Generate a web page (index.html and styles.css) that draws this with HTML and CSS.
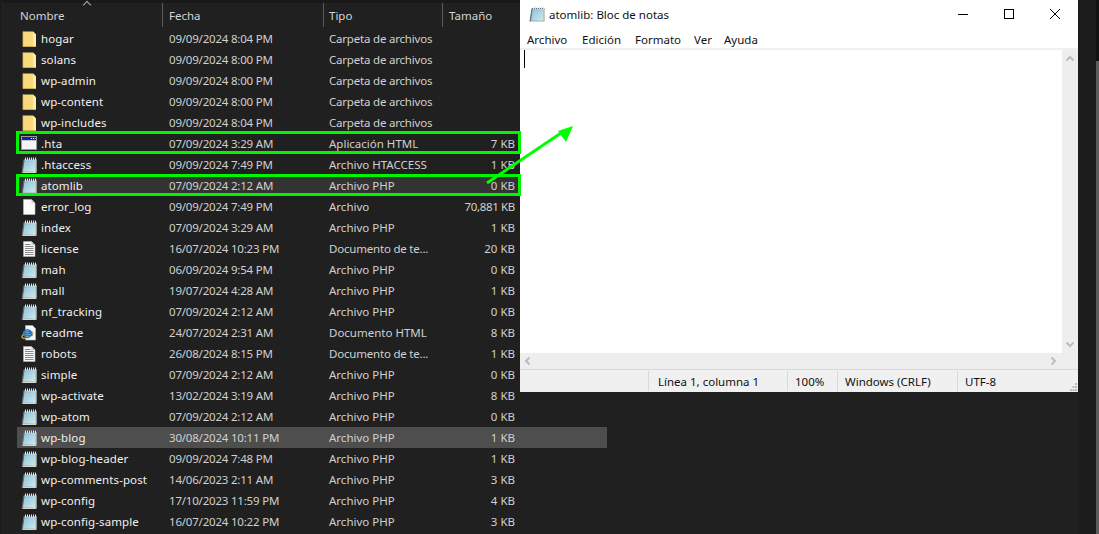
FILE: index.html
```html
<!DOCTYPE html>
<html lang="es">
<head>
<meta charset="utf-8">
<title>atomlib: Bloc de notas</title>
<link rel="stylesheet" href="styles.css">
</head>
<body>
<svg class="defs" width="0" height="0" aria-hidden="true">
  <defs>
    <linearGradient id="pad" x1="0" y1="0" x2="1" y2="1">
      <stop offset="0" stop-color="#7db6ce"/>
      <stop offset="1" stop-color="#d8eff2"/>
    </linearGradient>
    <symbol id="i-folder" viewBox="0 0 16 16">
      <path d="M2 .5h10l3 3v12H2z" fill="#f8da7c"/>
      <path d="M12 .5l3 3v12h-3z" fill="#fcecb0"/>
      <path d="M2 .5v15h13" fill="none" stroke="#dfb650" stroke-width=".8"/>
    </symbol>
    <symbol id="i-pad" viewBox="0 0 16 16">
      <path d="M3 2h12.500v13.500H1z" fill="#7d8488"/>
      <path d="M3.500 2.500h11v12.300H2z" fill="url(#pad)"/>
      <path d="M15 2.500V15.500H1.500" fill="none" stroke="#d9d5c6" stroke-width="1"/>
      <path d="M3.500 2.500h11" stroke="#5f6b70" stroke-width="1"/>
      <path d="M4.500 .5v3M6.500 .5v3M8.500 .5v3M10.500 .5v3M12.500 .5v3M14.500 .5v3" stroke="#e4e4e4" stroke-width="1"/>
      <path d="M3.500 6h11M3.300 8h11.200M3.100 10h11.400M2.900 12h11.600" stroke="#b5dbe5" stroke-width=".6"/>
      <path d="M3 2.500L1 15.500" stroke="#5f6b70" stroke-width="1"/>
    </symbol>
    <symbol id="i-hta" viewBox="0 0 16 16">
      <rect x=".5" y=".5" width="15" height="13" fill="#f4f4f4" stroke="#9a9a9a"/>
      <rect x="1" y="1" width="14" height="3" fill="#1a1fa8"/>
      <path d="M10 2.500h1M12 2.500h1M13.800 2.500h.7" stroke="#fff" stroke-width="1"/>
      <rect x="1" y="4" width="14" height="1" fill="#c4c4c4"/>
    </symbol>
    <symbol id="i-doc" viewBox="0 0 16 16">
      <path d="M2.500 .5h8l3.500 3.500v11.500H2.500z" fill="#fbfbfb" stroke="#bdbdbd" stroke-width=".6"/>
      <path d="M10.500 .5v3.500H14z" fill="#cfcfcf"/>
    </symbol>
    <symbol id="i-txt" viewBox="0 0 16 16">
      <path d="M2.500 .5h8l3.500 3.500v11.500H2.500z" fill="#f7f7f7" stroke="#b5b5b5" stroke-width=".6"/>
      <path d="M10.500 .5v3.500H14z" fill="#c8c8c8"/>
      <path d="M4 3.500h5.500M4 5.500h8.500M4 7.500h8.500M4 9.500h8.500M4 11.500h8.500M4 13.500h8.500" stroke="#8a8a8a" stroke-width="1"/>
    </symbol>
    <symbol id="i-ie" viewBox="0 0 16 16">
      <path d="M4.500 .5h7l3 3v11.500h-10z" fill="#f8f8f8" stroke="#b5b5b5" stroke-width=".6"/>
      <ellipse cx="6.500" cy="10" rx="6" ry="2.300" fill="none" stroke="#e8b823" stroke-width="1.200" transform="rotate(-25 6.500 10)"/>
      <path d="M9.600 10.400H3.700c.2 2.300 3.900 3 5.400 1M3.700 8.800c.2-2.800 5-3 5.600 0zM2.300 9.300c0-3.500 3.300-5 5-4.300 2.400.6 3.600 2.400 3.500 5.400H4.500" fill="none" stroke="#1b7fd6" stroke-width="1.500"/>
    </symbol>
  </defs>
</svg>

<div class="desktop">
  <main class="explorer">
    <header class="columns">
      <div class="col col-name">Nombre<span class="sort"></span></div>
      <div class="col col-date">Fecha</div>
      <div class="col col-type">Tipo</div>
      <div class="col col-size">Tamaño</div>
    </header>
    <ul class="files">
      <li class="file"><span class="name"><svg class="ico"><use href="#i-folder"/></svg>hogar</span><span class="date">09/09/2024 8:04 PM</span><span class="tight">Carpeta de archivos</span><span class="size"></span></li>
      <li class="file"><span class="name"><svg class="ico"><use href="#i-folder"/></svg>solans</span><span class="date">09/09/2024 8:00 PM</span><span class="tight">Carpeta de archivos</span><span class="size"></span></li>
      <li class="file"><span class="name"><svg class="ico"><use href="#i-folder"/></svg>wp-admin</span><span class="date">09/09/2024 8:00 PM</span><span class="tight">Carpeta de archivos</span><span class="size"></span></li>
      <li class="file"><span class="name"><svg class="ico"><use href="#i-folder"/></svg>wp-content</span><span class="date">09/09/2024 8:00 PM</span><span class="tight">Carpeta de archivos</span><span class="size"></span></li>
      <li class="file"><span class="name"><svg class="ico"><use href="#i-folder"/></svg>wp-includes</span><span class="date">09/09/2024 8:04 PM</span><span class="tight">Carpeta de archivos</span><span class="size"></span></li>
      <li class="file"><span class="name"><svg class="ico"><use href="#i-hta"/></svg>.hta</span><span class="date">07/09/2024 3:29 AM</span><span>Aplicación HTML</span><span class="size">7 KB</span></li>
      <li class="file"><span class="name"><svg class="ico"><use href="#i-pad"/></svg>.htaccess</span><span class="date">09/09/2024 7:49 PM</span><span>Archivo HTACCESS</span><span class="size">1 KB</span></li>
      <li class="file hover"><span class="name"><svg class="ico"><use href="#i-pad"/></svg>atomlib</span><span class="date">07/09/2024 2:12 AM</span><span>Archivo PHP</span><span class="size">0 KB</span></li>
      <li class="file"><span class="name"><svg class="ico"><use href="#i-doc"/></svg>error_log</span><span class="date">09/09/2024 7:49 PM</span><span>Archivo</span><span class="size tight-size">70,881 KB</span></li>
      <li class="file"><span class="name"><svg class="ico"><use href="#i-pad"/></svg>index</span><span class="date">07/09/2024 3:29 AM</span><span>Archivo PHP</span><span class="size">1 KB</span></li>
      <li class="file"><span class="name"><svg class="ico"><use href="#i-txt"/></svg>license</span><span class="date">16/07/2024 10:23 PM</span><span class="tight">Documento de te...</span><span class="size">20 KB</span></li>
      <li class="file"><span class="name"><svg class="ico"><use href="#i-pad"/></svg>mah</span><span class="date">06/09/2024 9:54 PM</span><span>Archivo PHP</span><span class="size">0 KB</span></li>
      <li class="file"><span class="name"><svg class="ico"><use href="#i-pad"/></svg>mall</span><span class="date">19/07/2024 4:28 AM</span><span>Archivo PHP</span><span class="size">1 KB</span></li>
      <li class="file"><span class="name"><svg class="ico"><use href="#i-pad"/></svg>nf_tracking</span><span class="date">07/09/2024 2:12 AM</span><span>Archivo PHP</span><span class="size">0 KB</span></li>
      <li class="file"><span class="name"><svg class="ico"><use href="#i-ie"/></svg>readme</span><span class="date">24/07/2024 2:31 AM</span><span>Documento HTML</span><span class="size">8 KB</span></li>
      <li class="file"><span class="name"><svg class="ico"><use href="#i-txt"/></svg>robots</span><span class="date">26/08/2024 8:15 PM</span><span class="tight">Documento de te...</span><span class="size">1 KB</span></li>
      <li class="file"><span class="name"><svg class="ico"><use href="#i-pad"/></svg>simple</span><span class="date">07/09/2024 2:12 AM</span><span>Archivo PHP</span><span class="size">0 KB</span></li>
      <li class="file"><span class="name"><svg class="ico"><use href="#i-pad"/></svg>wp-activate</span><span class="date">13/02/2024 3:19 AM</span><span>Archivo PHP</span><span class="size">8 KB</span></li>
      <li class="file"><span class="name"><svg class="ico"><use href="#i-pad"/></svg>wp-atom</span><span class="date">07/09/2024 2:12 AM</span><span>Archivo PHP</span><span class="size">0 KB</span></li>
      <li class="file selected"><span class="name"><svg class="ico"><use href="#i-pad"/></svg>wp-blog</span><span class="date">30/08/2024 10:11 PM</span><span>Archivo PHP</span><span class="size">1 KB</span></li>
      <li class="file"><span class="name"><svg class="ico"><use href="#i-pad"/></svg>wp-blog-header</span><span class="date">09/09/2024 7:48 PM</span><span>Archivo PHP</span><span class="size">1 KB</span></li>
      <li class="file"><span class="name"><svg class="ico"><use href="#i-pad"/></svg>wp-comments-post</span><span class="date">14/06/2023 2:11 AM</span><span>Archivo PHP</span><span class="size">3 KB</span></li>
      <li class="file"><span class="name"><svg class="ico"><use href="#i-pad"/></svg>wp-config</span><span class="date">17/10/2023 11:59 PM</span><span>Archivo PHP</span><span class="size">4 KB</span></li>
      <li class="file"><span class="name"><svg class="ico"><use href="#i-pad"/></svg>wp-config-sample</span><span class="date">16/07/2024 10:22 PM</span><span>Archivo PHP</span><span class="size">3 KB</span></li>
    </ul>
  </main>
  <aside class="gutter"><div class="thumb"></div></aside>

  <section class="notepad">
    <div class="titlebar">
      <svg class="title-ico"><use href="#i-pad"/></svg>
      <span class="title-text">atomlib: Bloc de notas</span>
      <div class="controls">
        <svg class="ctl" viewBox="0 0 46 30"><path d="M18 14.500h10" stroke="#000" stroke-width="1"/></svg>
        <svg class="ctl" viewBox="0 0 46 30"><rect x="18.500" y="9.500" width="9" height="9" fill="none" stroke="#000"/></svg>
        <svg class="ctl" viewBox="0 0 46 30"><path d="M18 9l10 10M28 9L18 19" stroke="#000" stroke-width="1"/></svg>
      </div>
    </div>
    <nav class="menu">
      <span>Archivo</span><span>Edición</span><span>Formato</span><span>Ver</span><span>Ayuda</span>
    </nav>
    <div class="editor">
      <div class="page"><span class="caret"></span></div>
      <div class="vscroll">
        <svg class="arrow" viewBox="0 0 16 16"><path d="M4.500 9.500L8 6l3.500 3.500" fill="none" stroke="#bdbdbd" stroke-width="2"/></svg>
        <svg class="arrow" viewBox="0 0 16 16"><path d="M4.500 6.500L8 10l3.500-3.500" fill="none" stroke="#bdbdbd" stroke-width="2"/></svg>
      </div>
    </div>
    <div class="hscroll">
      <svg class="arrow" viewBox="0 0 16 16"><path d="M9.500 4.500L6 8l3.500 3.500" fill="none" stroke="#bdbdbd" stroke-width="2"/></svg>
      <svg class="arrow" viewBox="0 0 16 16"><path d="M6.500 4.500L10 8l-3.500 3.500" fill="none" stroke="#bdbdbd" stroke-width="2"/></svg>
    </div>
    <footer class="status">
      <span class="cell cell-blank"></span>
      <span class="cell cell-pos">Línea 1, columna 1</span>
      <span class="cell cell-zoom">100%</span>
      <span class="cell cell-eol">Windows (CRLF)</span>
      <span class="cell cell-enc">UTF-8</span>
      <svg class="grip" viewBox="0 0 8 8"><path d="M5 0h2v2H5zM2.500 3H4.500V5H2.500zM5 3h2v2H5zM0 6h2v2H0zM2.500 6h2v2h-2zM5 6h2v2H5z" fill="#bcbcbc"/></svg>
    </footer>
  </section>

  <div class="mark mark-hta"></div>
  <div class="mark mark-atomlib"></div>
  <svg class="pointer" viewBox="0 0 100 70"><path d="M2 59L76 9" stroke="#00ff00" stroke-width="3"/><path d="M88 2L73 7l8 11z" fill="#00ff00"/></svg>
</div>
</body>
</html>
```
FILE: styles.css
```css
* { box-sizing: border-box; }
html, body { margin: 0; padding: 0; }
body { background: #202020; font-family: "Noto Sans", "Open Sans", sans-serif; font-size: 11.5px; overflow: hidden; }
.defs { position: absolute; }

.desktop { position: relative; display: flex; width: 1099px; height: 534px; overflow: hidden; background: #202020; }
.explorer { flex: 0 0 1078px; padding-left: 1px; border-left: 1px solid #191919; }
.gutter { flex: 1; background: #1c1c1c; display: flex; justify-content: flex-end; }
.thumb { width: 3px; margin-top: 61px; background: #5c5c5c; box-shadow: 0 -61px 0 #121212; }

.columns { display: grid; grid-template-columns: 160px 161px 119px 100px; height: 28px; border-top: 3px solid #191919; color: #d4d4d4; }
.col { position: relative; height: 24px; line-height: 25px; padding-left: 6px; border-left: 1px solid #5a5a5a; }
.col-name { padding-left: 18px; border-left: 0; }
.col-type { padding-left: 5px; }
.sort { position: absolute; left: 82px; top: -1px; width: 6px; height: 6px; border-left: 1px solid #aaa; border-top: 1px solid #aaa; transform: rotate(45deg); }

.files { list-style: none; margin: 0 0 0 15px; padding: 0; width: 590px; }
.file { display: grid; grid-template-columns: 152px 160px 110px 76px; align-items: center; height: 21px; color: #d0d0d0; white-space: nowrap; }
.file.hover { background: #333; }
.file.selected { background: #4e4e4e; }
.name { display: flex; align-items: center; gap: 4px; padding-left: 4px; color: #f0f0f0; letter-spacing: .1px; }
.date { letter-spacing: -.2px; }
.tight { letter-spacing: -.2px; }
.ico { width: 16px; height: 16px; flex: none; }
.size { text-align: right; }
.tight-size { letter-spacing: -.35px; }

.notepad { position: absolute; left: 520px; top: 0; width: 558px; height: 392px; display: flex; flex-direction: column; background: #fff; color: #111; }
.titlebar { display: flex; align-items: center; height: 30px; padding: 0 0 2px 9px; }
.title-ico { width: 16px; height: 16px; margin-right: 4px; }
.title-text { flex: 1; }
.controls { display: flex; margin-top: 2px; }
.ctl { width: 46px; height: 30px; }
.menu { display: grid; grid-template-columns: 55px 53px 59px 30px auto; justify-content: start; height: 18px; line-height: 19px; padding-left: 7px; }
.editor { flex: 1; display: flex; border-top: 2px solid #f0f0f0; min-height: 0; }
.page { flex: 1; background: #fff; padding: 0 0 0 4px; }
.caret { display: block; width: 1px; height: 18px; background: #000; }
.vscroll { width: 16px; background: #eeeeee; display: flex; flex-direction: column; justify-content: space-between; align-items: center; padding: 1px 0; }
.hscroll { height: 16px; background: #eeeeee; display: flex; justify-content: space-between; align-items: center; padding: 0 17px 0 0; }
.arrow { width: 16px; height: 16px; display: block; }
.status { display: flex; height: 23px; align-items: center; background: #f0f0f0; border-top: 1px solid #d9d9d9; }
.cell { height: 20px; line-height: 22px; padding-left: 9px; border-left: 1px solid #d9d9d9; }
.cell-blank { width: 128px; border-left: 0; padding: 0; }
.cell-pos { width: 139px; }
.cell-zoom { width: 50px; padding-left: 7px; }
.cell-eol { width: 120px; padding-left: 7px; }
.cell-enc { flex: 1; padding-left: 7px; }
.grip { width: 8px; height: 8px; flex: none; align-self: flex-end; margin-bottom: 1px; }

.mark { position: absolute; left: 16px; width: 505px; border: 3px solid #00f500; }
.mark-hta { top: 131px; height: 23px; }
.mark-atomlib { top: 174px; height: 22px; }
.pointer { position: absolute; left: 485px; top: 124px; width: 100px; height: 70px; }
```
